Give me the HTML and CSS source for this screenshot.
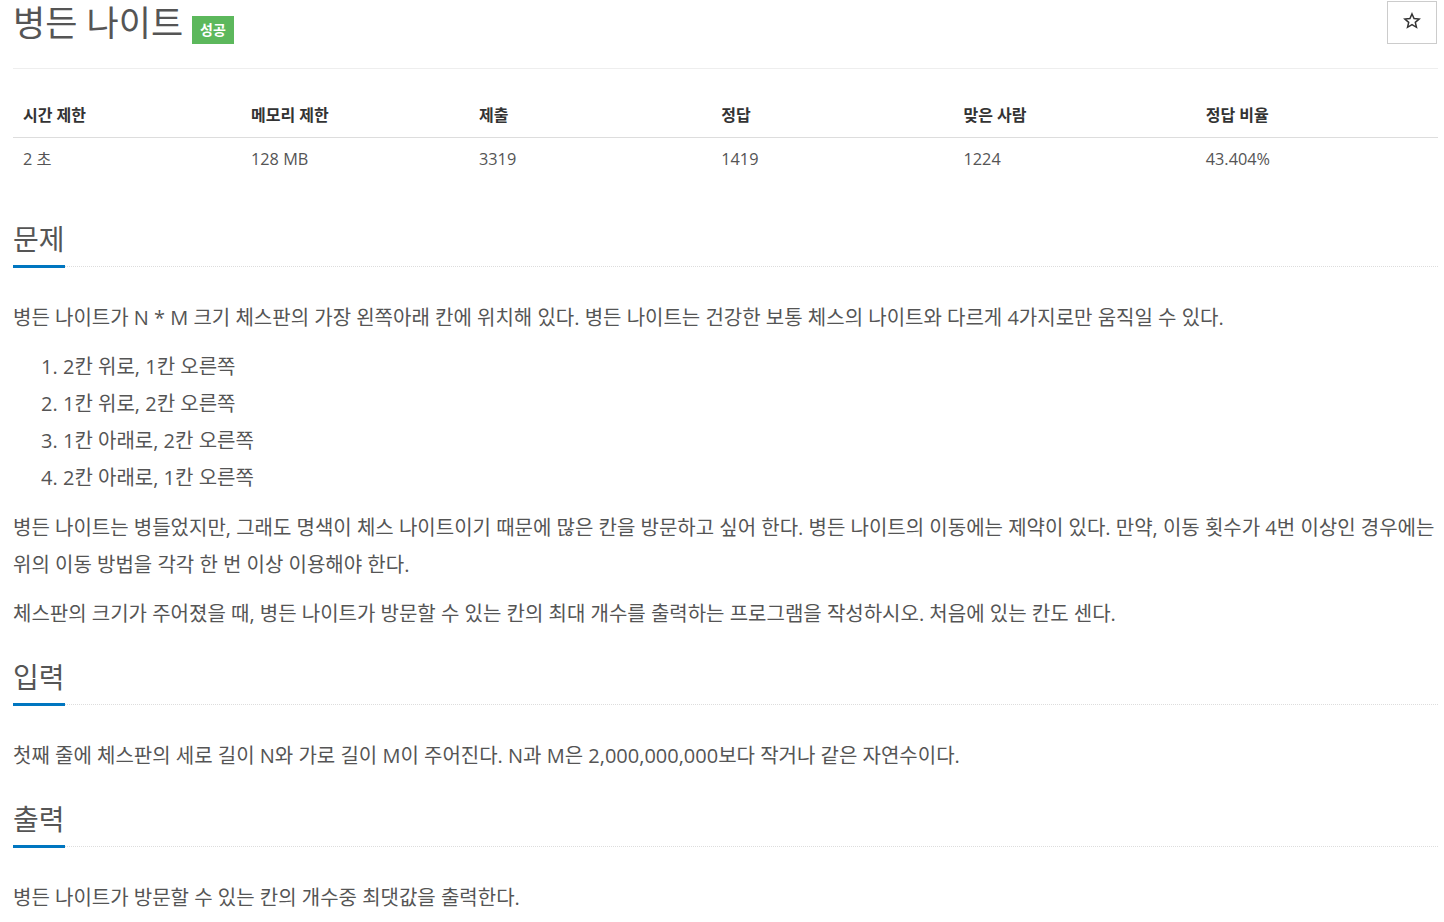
FILE: index.html
```html
<!DOCTYPE html>
<html lang="ko">
<head>
<meta charset="utf-8">
<title>병든 나이트</title>
<link rel="stylesheet" href="styles.css">
</head>
<body>
<div class="page">
  <div class="page-header">
    <h1 class="title">병든 나이트 <span class="badge">성공</span></h1>
    <button class="star-btn" type="button" aria-label="즐겨찾기">
      <svg width="18" height="18" viewBox="0 0 24 24" aria-hidden="true"><path d="M12 2.6l2.75 6.2 6.75.6-5.1 4.45 1.55 6.6L12 16.950 6.05 20.45 7.6 13.85 2.5 9.4l6.75-.6z" fill="none" stroke="#333" stroke-width="2" stroke-linejoin="miter"/></svg>
    </button>
  </div>

  <table class="info">
    <thead>
      <tr>
        <th class="w16">시간 제한</th>
        <th class="w16">메모리 제한</th>
        <th class="w17">제출</th>
        <th class="w17">정답</th>
        <th class="w17">맞은 사람</th>
        <th class="w17">정답 비율</th>
      </tr>
    </thead>
    <tbody>
      <tr>
        <td>2 초</td>
        <td>128 MB</td>
        <td>3319</td>
        <td>1419</td>
        <td>1224</td>
        <td>43.404%</td>
      </tr>
    </tbody>
  </table>

  <section class="section">
    <div class="headline"><h2>문제</h2></div>
    <div class="text">
      <p>병든 나이트가 N * M 크기 체스판의 가장 왼쪽아래 칸에 위치해 있다. 병든 나이트는 건강한 보통 체스의 나이트와 다르게 4가지로만 움직일 수 있다.</p>
      <ol>
        <li>2칸 위로, 1칸 오른쪽</li>
        <li>1칸 위로, 2칸 오른쪽</li>
        <li>1칸 아래로, 2칸 오른쪽</li>
        <li>2칸 아래로, 1칸 오른쪽</li>
      </ol>
      <p>병든 나이트는 병들었지만, 그래도 명색이 체스 나이트이기 때문에 많은 칸을 방문하고 싶어 한다. 병든 나이트의 이동에는 제약이 있다. 만약, 이동 횟수가 4번 이상인 경우에는 위의 이동 방법을 각각 한 번 이상 이용해야 한다.</p>
      <p>체스판의 크기가 주어졌을 때, 병든 나이트가 방문할 수 있는 칸의 최대 개수를 출력하는 프로그램을 작성하시오. 처음에 있는 칸도 센다.</p>
    </div>
  </section>

  <section class="section">
    <div class="headline"><h2>입력</h2></div>
    <div class="text">
      <p>첫째 줄에 체스판의 세로 길이 N와 가로 길이 M이 주어진다. N과 M은 2,000,000,000보다 작거나 같은 자연수이다.</p>
    </div>
  </section>

  <section class="section">
    <div class="headline"><h2>출력</h2></div>
    <div class="text">
      <p>병든 나이트가 방문할 수 있는 칸의 개수중 최댓값을 출력한다.</p>
    </div>
  </section>
</div>
</body>
</html>
```

FILE: styles.css
```css
* { box-sizing: border-box; }

body {
  margin: 0;
  background: #fff;
  color: #555;
  font-family: "Open Sans", "Noto Sans CJK KR", sans-serif;
}

.page {
  margin: 0 6px 0 13px;
}

.page-header {
  display: flex;
  justify-content: space-between;
  align-items: flex-start;
  border-bottom: 1px solid #eee;
  height: 69px;
  padding-top: 1px;
}

.title {
  margin: 0;
  font-size: 35px;
  font-weight: 400;
  line-height: 42px;
  color: #555;
  display: flex;
  align-items: center;
  gap: 9px;
}

.badge {
  display: inline-block;
  background: #5cb85c;
  color: #fff;
  font-size: 14px;
  font-weight: 700;
  line-height: 28px;
  height: 28px;
  padding: 0 8px;
  margin-top: 15px;
}

.star-btn {
  width: 50px;
  height: 43px;
  margin-right: 1px;
  border: 1px solid #ccc;
  background: #fff;
  padding: 0 0 4px;
  display: flex;
  align-items: center;
  justify-content: center;
}

.star-btn svg {
  display: block;
}

.info {
  width: 100%;
  border-collapse: collapse;
  margin-top: 22px;
  font-size: 16px;
}

.info th, .info td {
  text-align: left;
  padding: 12px 10px;
  line-height: 22px;
}

.info th {
  color: #333;
  font-weight: 700;
  font-size: 16px;
  padding-top: 13px;
  padding-bottom: 11px;
  border-bottom: 1px solid #ddd;
}

.info td {
  color: #555;
  font-size: 16.3px;
  padding-top: 10px;
}

.w16 { width: 16%; }
.w17 { width: 17%; }

.section {
  margin-top: 30px;
}

.info + .section {
  margin-top: 42px;
}

.headline {
  border-bottom: 1px dotted #ddd;
  margin-bottom: 32px;
}

.headline h2 {
  display: inline-block;
  margin: 0 0 -2px;
  font-size: 28px;
  font-weight: 400;
  line-height: 31px;
  padding-bottom: 10px;
  border-bottom: 3px solid #0076c0;
  color: #555;
}

.text {
  font-size: 20px;
  line-height: 37px;
}

.text p {
  margin: 0 0 12px;
}

.text ol {
  margin: 0 0 13px;
  padding-left: 50px;
}
```
